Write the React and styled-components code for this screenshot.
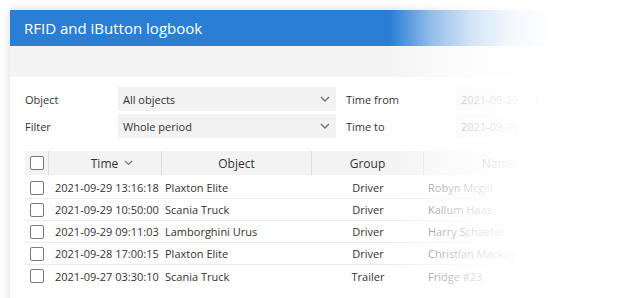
import React from 'react';
import styled, { createGlobalStyle } from 'styled-components';

const GlobalStyle = createGlobalStyle`
  html, body {
    margin: 0;
    padding: 0;
    background: #fff;
  }
  body {
    font-family: 'Open Sans', 'Liberation Sans', sans-serif;
    color: #333;
    overflow: hidden;
  }
`;

const Page = styled.div`
  position: relative;
  width: 623px;
  height: 298px;
  padding: 10px 0 0 10px;
  box-sizing: border-box;
  overflow: hidden;
`;

const Panel = styled.div`
  width: 680px;
  height: 320px;
  background: #fff;
  box-shadow: 0 0 9px rgba(0, 0, 0, 0.16);
`;

const TitleBar = styled.div`
  height: 36px;
  background: #2a7fd5;
  color: #fff;
  font-size: 15px;
  display: flex;
  align-items: center;
  padding-left: 14px;
`;

const Toolbar = styled.div`
  height: 31px;
  background: #f4f4f4;
`;

const Body = styled.div`
  padding: 10px 15px 0;
`;

const Form = styled.div`
  display: grid;
  grid-template-columns: 93px 218px 119px 65px 26px 20px;
  grid-auto-rows: 24px;
  row-gap: 3px;
  font-size: 11px;
`;

const Label = styled.div`
  display: flex;
  align-items: center;
  padding-left: ${(p) => p.indent || 0}px;
  color: #333;
`;

const Select = styled.div`
  display: flex;
  align-items: center;
  justify-content: space-between;
  background: #f2f2f2;
  padding: 0 6px 0 5px;
  color: #333;
`;

const DateBox = styled.div`
  display: flex;
  align-items: center;
  background: #f2f2f2;
  padding-left: 6px;
  color: #444;
`;

const IconCell = styled.div`
  display: flex;
  align-items: center;
  justify-content: ${(p) => p.align || 'center'};
  color: #777;
`;

const Table = styled.div`
  margin-top: 13px;
  font-size: 11px;
`;

const HeaderRow = styled.div`
  display: grid;
  grid-template-columns: 24px 113px 150px 112px 150px 60px;
  height: 24px;
  background: #f3f3f3;
  font-size: 12px;
  color: #333;
`;

const HeadCell = styled.div`
  display: flex;
  align-items: center;
  justify-content: center;
  gap: 6px;
  padding-left: ${(p) => p.pad || 0}px;
  border-right: ${(p) => (p.last ? 'none' : '1px solid #dcdcdc')};
`;

const Rows = styled.div`
  padding-top: 2px;
`;

const Row = styled.div`
  display: grid;
  grid-template-columns: 24px 113px 150px 112px 150px;
  height: 22px;
  box-sizing: border-box;
  border-bottom: ${(p) => (p.last ? 'none' : '1px solid #ebebeb')};
`;

const Cell = styled.div`
  display: flex;
  align-items: center;
  justify-content: ${(p) => (p.center ? 'center' : 'flex-start')};
  padding-left: ${(p) => p.pad || 0}px;
  white-space: nowrap;
  color: ${(p) => p.color || '#333'};
`;

const Check = styled.span`
  display: inline-block;
  width: 14px;
  height: 14px;
  border: 1.5px solid #7a7a7a;
  border-radius: 2px;
  box-sizing: border-box;
  background: #fff;
`;

const Fade = styled.div`
  position: absolute;
  inset: 0;
  pointer-events: none;
  background: linear-gradient(
    to right,
    rgba(255, 255, 255, 0) 390px,
    rgba(255, 255, 255, 0.5) 432px,
    rgba(255, 255, 255, 0.8) 472px,
    rgba(255, 255, 255, 0.95) 512px,
    #fff 552px
  );
`;

const Chevron = ({ size = 10 }) => (
  <svg width={size} height={size * 0.6} viewBox="0 0 10 6" fill="none">
    <polyline points="1,1 5,5 9,1" stroke="#6f6f6f" strokeWidth="1.3" />
  </svg>
);

const Calendar = () => (
  <svg width="10" height="10" viewBox="0 0 10 10" fill="none" stroke="#777" strokeWidth="1">
    <rect x="0.5" y="1.5" width="9" height="8" />
    <line x1="0.5" y1="4" x2="9.5" y2="4" />
    <line x1="3" y1="0" x2="3" y2="2.5" />
    <line x1="7" y1="0" x2="7" y2="2.5" />
  </svg>
);

const Clock = () => (
  <svg width="8" height="10" viewBox="0 0 8 10" fill="none" stroke="#888" strokeWidth="1">
    <ellipse cx="4" cy="5" rx="3" ry="4" />
  </svg>
);

const rows = [
  { time: '2021-09-29 13:16:18', object: 'Plaxton Elite', group: 'Driver', name: 'Robyn Mcgill' },
  { time: '2021-09-29 10:50:00', object: 'Scania Truck', group: 'Driver', name: 'Kallum Haas' },
  { time: '2021-09-29 09:11:03', object: 'Lamborghini Urus', group: 'Driver', name: 'Harry Schaefer' },
  { time: '2021-09-28 17:00:15', object: 'Plaxton Elite', group: 'Driver', name: 'Christian Mackay' },
  { time: '2021-09-27 03:30:10', object: 'Scania Truck', group: 'Trailer', name: 'Fridge #23' },
];

const App = () => (
  <Page>
    <GlobalStyle />
    <Panel>
      <TitleBar>RFID and iButton logbook</TitleBar>
      <Toolbar />
      <Body>
        <Form>
          <Label>Object</Label>
          <Select>
            All objects
            <Chevron />
          </Select>
          <Label indent={10}>Time from</Label>
          <DateBox>2021-09-29</DateBox>
          <IconCell align="flex-end">
            <Calendar />
          </IconCell>
          <IconCell>
            <Clock />
          </IconCell>

          <Label>Filter</Label>
          <Select>
            Whole period
            <Chevron />
          </Select>
          <Label indent={10}>Time to</Label>
          <DateBox>2021-09-29</DateBox>
          <IconCell align="flex-end">
            <Calendar />
          </IconCell>
          <IconCell>
            <Clock />
          </IconCell>
        </Form>

        <Table>
          <HeaderRow>
            <HeadCell>
              <Check />
            </HeadCell>
            <HeadCell pad={14}>
              Time
              <Chevron size={9} />
            </HeadCell>
            <HeadCell>Object</HeadCell>
            <HeadCell>Group</HeadCell>
            <HeadCell>Name</HeadCell>
            <HeadCell last />
          </HeaderRow>
          <Rows>
            {rows.map((r, i) => (
              <Row key={r.time} last={i === rows.length - 1}>
                <Cell center>
                  <Check />
                </Cell>
                <Cell pad={6}>{r.time}</Cell>
                <Cell pad={3}>{r.object}</Cell>
                <Cell center>{r.group}</Cell>
                <Cell pad={4} color="#555">{r.name}</Cell>
              </Row>
            ))}
          </Rows>
        </Table>
      </Body>
    </Panel>
    <Fade />
  </Page>
);

export default App;
